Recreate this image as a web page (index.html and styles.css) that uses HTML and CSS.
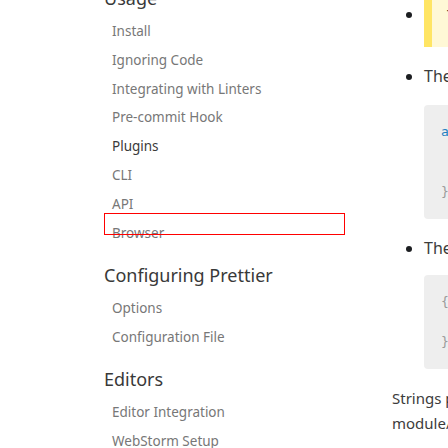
FILE: index.html
```html
<!DOCTYPE html>
<html lang="en">
<head>
<meta charset="utf-8">
<title>Plugins · Prettier</title>
<link rel="stylesheet" href="styles.css">
</head>
<body>
<div class="page">
  <nav class="sidebar">
    <div class="section">
      <h3 class="section-title">Usage</h3>
      <ul class="items">
        <li class="item">Install</li>
        <li class="item">Ignoring Code</li>
        <li class="item">Integrating with Linters</li>
        <li class="item">Pre-commit Hook</li>
        <li class="item active">Plugins</li>
        <li class="item">CLI</li>
        <li class="item">API</li>
        <li class="item">Browser</li>
      </ul>
    </div>
    <div class="section">
      <h3 class="section-title">Configuring Prettier</h3>
      <ul class="items">
        <li class="item">Options</li>
        <li class="item">Configuration File</li>
      </ul>
    </div>
    <div class="section">
      <h3 class="section-title">Editors</h3>
      <ul class="items">
        <li class="item">Editor Integration</li>
        <li class="item">WebStorm Setup</li>
      </ul>
    </div>
    <div class="focus-ring"></div>
  </nav>
  <main class="content">
    <ul class="list">
      <li class="list-item">
        <div class="tip"><p>Tip: You can set <code>--plugin</code> options multiple times.</p></div>
      </li>
      <li class="list-item">
        <p class="li-text">The API, via the <code>plugins</code> options:</p>
        <pre class="code"><span class="kw">await</span> prettier.<span class="fn">format</span>(<span class="str">"code"</span>, <span class="punc">{</span>
  parser: <span class="str">"foo"</span>,
  plugins: [<span class="str">"prettier-plugin-foo"</span>],
<span class="punc">});</span></pre>
      </li>
      <li class="list-item">
        <p class="li-text">The Configuration File:</p>
        <pre class="code"><span class="punc">{</span>
  <span class="str">"plugins"</span>: [<span class="str">"prettier-plugin-foo"</span>]
<span class="punc">}</span></pre>
      </li>
    </ul>
    <p class="para">Strings provided to <code>plugins</code> are ultimately passed to <code>import()</code> expression, so you can provide a module/package name, a path, or anything else <code>import()</code> takes.</p>
  </main>
</div>
</body>
</html>
```

FILE: styles.css
```css
html, body {
  margin: 0;
  padding: 0;
  background: #ffffff;
  overflow: hidden;
  width: 448px;
  height: 448px;
}

.page {
  display: flex;
  align-items: flex-start;
  width: 1200px;
  font-family: "Noto Sans", "Open Sans", sans-serif;
}

.sidebar {
  position: relative;
  width: 288px;
  padding-left: 104px;
  margin-top: -14px;
  flex: none;
  box-sizing: border-box;
}

.section + .section {
  margin-top: 15.6px;
}

.section-title {
  margin: 0 0 7.1px 0;
  font-size: 18px;
  line-height: 24px;
  font-weight: 400;
  color: #393939;
}

.items {
  list-style: none;
  margin: 0;
  padding: 0 0 0 8px;
}

.item {
  font-size: 13.5px;
  line-height: 20.8px;
  padding: 4px 0;
  color: #777777;
}

.item.active {
  color: #3a3a3a;
}

.focus-ring {
  position: absolute;
  left: 104px;
  top: 227px;
  width: 239px;
  height: 20px;
  border: 1px solid #ff0000;
}

.content {
  margin-left: 104px;
  width: 760px;
  flex: none;
  font-size: 16px;
  line-height: 24px;
  color: #3c3c3c;
}

.list {
  margin: 0;
  padding-left: 32px;
}

.list-item {
  margin: 0;
}

.list-item + .list-item {
  margin-top: 17px;
}

.list-item::marker {
  color: #1c1e21;
}

.li-text {
  margin: 0;
}

.tip {
  height: 47px;
  box-sizing: border-box;
  background: #fff8d6;
  border-left: 8px solid #ffe564;
  padding: 4px 15px;
  font-size: 14px;
  line-height: 22px;
}

.tip p {
  margin: 0;
}

.code {
  margin: 15px 0 0 0;
  padding: 16.5px 17px;
  background: #eeeeee;
  border-radius: 4px;
  font-family: "DejaVu Sans Mono", "Liberation Mono", monospace;
  font-size: 13px;
  line-height: 20.3px;
  color: #393a34;
}

.kw {
  color: #1e7fc2;
}

.fn {
  color: #6f42c1;
}

.str {
  color: #a31515;
}

.punc {
  color: #9a9a9a;
}

code {
  font-family: "DejaVu Sans Mono", monospace;
  font-size: 13px;
}

.para {
  margin: 18px 0 0 0;
  font-size: 15px;
  line-height: 23.5px;
}
```
